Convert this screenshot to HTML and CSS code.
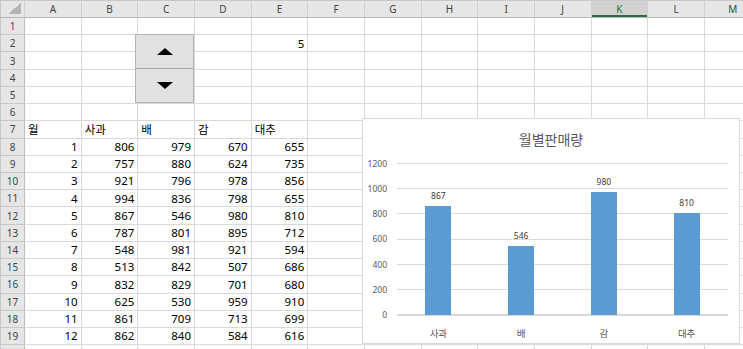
FILE: index.html
```html
<!DOCTYPE html>
<html lang="ko">
<head>
    <meta charset="UTF-8">
    <title>월별판매량</title>
    <link rel="stylesheet" href="styles.css">
</head>
<body>

    <table class="sheet">
        <colgroup><col class="head-col"><col span="13" class="cell-col"></colgroup>
        <tr class="col-head">
            <th class="corner"></th><th>A</th><th>B</th><th>C</th><th>D</th><th>E</th><th>F</th><th>G</th><th>H</th><th>I</th><th>J</th><th class="sel">K</th><th>L</th><th>M</th>
        </tr>
        <tr><th>1</th><td></td><td></td><td></td><td></td><td></td><td></td><td></td><td></td><td></td><td></td><td></td><td></td><td></td></tr>
        <tr><th>2</th><td></td><td></td><td></td><td></td><td>5</td><td></td><td></td><td></td><td></td><td></td><td></td><td></td><td></td></tr>
        <tr><th>3</th><td></td><td></td><td></td><td></td><td></td><td></td><td></td><td></td><td></td><td></td><td></td><td></td><td></td></tr>
        <tr><th>4</th><td></td><td></td><td></td><td></td><td></td><td></td><td></td><td></td><td></td><td></td><td></td><td></td><td></td></tr>
        <tr><th>5</th><td></td><td></td><td></td><td></td><td></td><td></td><td></td><td></td><td></td><td></td><td></td><td></td><td></td></tr>
        <tr><th>6</th><td></td><td></td><td></td><td></td><td></td><td></td><td></td><td></td><td></td><td></td><td></td><td></td><td></td></tr>
        <tr class="labels"><th>7</th><td>월</td><td>사과</td><td>배</td><td>감</td><td>대추</td><td></td><td></td><td></td><td></td><td></td><td></td><td></td><td></td></tr>
        <tr><th>8</th><td>1</td><td>806</td><td>979</td><td>670</td><td>655</td><td></td><td></td><td></td><td></td><td></td><td></td><td></td><td></td></tr>
        <tr><th>9</th><td>2</td><td>757</td><td>880</td><td>624</td><td>735</td><td></td><td></td><td></td><td></td><td></td><td></td><td></td><td></td></tr>
        <tr><th>10</th><td>3</td><td>921</td><td>796</td><td>978</td><td>856</td><td></td><td></td><td></td><td></td><td></td><td></td><td></td><td></td></tr>
        <tr><th>11</th><td>4</td><td>994</td><td>836</td><td>798</td><td>655</td><td></td><td></td><td></td><td></td><td></td><td></td><td></td><td></td></tr>
        <tr><th>12</th><td>5</td><td>867</td><td>546</td><td>980</td><td>810</td><td></td><td></td><td></td><td></td><td></td><td></td><td></td><td></td></tr>
        <tr><th>13</th><td>6</td><td>787</td><td>801</td><td>895</td><td>712</td><td></td><td></td><td></td><td></td><td></td><td></td><td></td><td></td></tr>
        <tr><th>14</th><td>7</td><td>548</td><td>981</td><td>921</td><td>594</td><td></td><td></td><td></td><td></td><td></td><td></td><td></td><td></td></tr>
        <tr><th>15</th><td>8</td><td>513</td><td>842</td><td>507</td><td>686</td><td></td><td></td><td></td><td></td><td></td><td></td><td></td><td></td></tr>
        <tr><th>16</th><td>9</td><td>832</td><td>829</td><td>701</td><td>680</td><td></td><td></td><td></td><td></td><td></td><td></td><td></td><td></td></tr>
        <tr><th>17</th><td>10</td><td>625</td><td>530</td><td>959</td><td>910</td><td></td><td></td><td></td><td></td><td></td><td></td><td></td><td></td></tr>
        <tr><th>18</th><td>11</td><td>861</td><td>709</td><td>713</td><td>699</td><td></td><td></td><td></td><td></td><td></td><td></td><td></td><td></td></tr>
        <tr><th>19</th><td>12</td><td>862</td><td>840</td><td>584</td><td>616</td><td></td><td></td><td></td><td></td><td></td><td></td><td></td><td></td></tr>
        <tr><th></th><td></td><td></td><td></td><td></td><td></td><td></td><td></td><td></td><td></td><td></td><td></td><td></td><td></td></tr>
    </table>

    <!-- spin button form control -->
    <div class="spinner">
        <button class="spin-btn"><span class="tri-up"></span></button>
        <button class="spin-btn"><span class="tri-down"></span></button>
    </div>

    <!-- chart object -->
    <div class="chart">
        <div class="chart-title">월별판매량</div>
        <div class="chart-body">
            <div class="axis-y">
                <span>1200</span><span>1000</span><span>800</span><span>600</span><span>400</span><span>200</span><span>0</span>
            </div>
            <div class="plot">
                <div class="slot"><span class="value">867</span><div class="bar" style="height: 109px;"></div></div>
                <div class="slot"><span class="value">546</span><div class="bar" style="height: 69px;"></div></div>
                <div class="slot"><span class="value">980</span><div class="bar" style="height: 123px;"></div></div>
                <div class="slot"><span class="value">810</span><div class="bar" style="height: 102px;"></div></div>
            </div>
        </div>
        <div class="axis-x">
            <span>사과</span><span>배</span><span>감</span><span>대추</span>
        </div>
    </div>

</body>
</html>
```

FILE: styles.css
```css
body {
    margin: 0; overflow: hidden;
    width: 743px; height: 349px; position: relative;
    background: #fff;
    font-family: 'Noto Sans', 'Noto Sans CJK KR', sans-serif;
}

/* Worksheet grid */
.sheet {
    border-collapse: collapse; table-layout: fixed;
    width: 761px; font-size: 11.5px; color: #000;
}
.head-col { width: 24px; }
.cell-col { width: 56.67px; }

.sheet tr { height: 17.23px; }
.sheet td {
    border: 1px solid #d9d9d9; padding: 0 3px;
    text-align: right; white-space: nowrap; overflow: hidden;
    line-height: 1; vertical-align: middle;
}
.sheet tr.labels td { text-align: left; }

.sheet th {
    background: #e6e6e6; color: #444; font-weight: normal;
    font-size: 10px; padding: 0; line-height: 1;
    border: 1px solid #c8c8c8; border-right-color: #bdbdbd;
}
.sheet tr.col-head { height: 17px; }
.col-head th { border-bottom-color: #b8b8b8; border-right-color: #d0d0d0; }
.col-head th.sel {
    background: #d2d2d2; color: #217346;
    box-shadow: inset 0 -2px 0 #217346;
}
.corner {
    background:
        linear-gradient(to top left, #b4b4b4 50%, transparent 50%) no-repeat right 3px bottom 3px / 13px 11px,
        #e6e6e6 !important;
}

/* Spin button */
.spinner {
    position: absolute; left: 135px; top: 34px;
    width: 59px; height: 69px; box-sizing: border-box;
    border: 1px solid #b2b2b2; background: #e1e1e1;
    display: flex; flex-direction: column;
}
.spin-btn {
    flex: 1; margin: 0; padding: 0;
    background: #e1e1e1; border: none;
    display: flex; justify-content: center; align-items: center;
}
.spin-btn + .spin-btn { border-top: 1px solid #a8a8a8; }
.tri-up {
    border-left: 8px solid transparent; border-right: 8px solid transparent;
    border-bottom: 7px solid #000;
}
.tri-down {
    border-left: 8px solid transparent; border-right: 8px solid transparent;
    border-top: 7px solid #000;
}

/* Chart */
.chart {
    position: absolute; left: 362px; top: 118px;
    width: 378px; height: 226px; box-sizing: border-box;
    border: 1px solid #d9d9d9; background: #fff;
    color: #595959;
}
.chart-title {
    padding-top: 11px; text-align: center;
    font-size: 14px; line-height: 20px;
}
.chart-body {
    display: flex; gap: 10px; margin-top: 14px;
}
.axis-y {
    width: 24px; height: 161px; margin-top: -5px;
    display: flex; flex-direction: column; justify-content: space-between;
    text-align: right; font-size: 8.5px; line-height: 10px;
}
.plot {
    width: 331px; height: 151px;
    border-top: 1px solid #d9d9d9; border-bottom: 1px solid #d9d9d9;
    margin-top: -1px;
    background: repeating-linear-gradient(to bottom, transparent 0 24.17px, #d9d9d9 24.17px 25.17px);
    display: flex;
}
.slot {
    flex: 1;
    display: flex; flex-direction: column; justify-content: flex-end; align-items: center;
}
.value { font-size: 8.5px; line-height: 10px; margin-bottom: 5px; color: #404040; }
.bar { width: 26px; background: #5b9bd5; }

.axis-x {
    display: flex; width: 331px; margin-left: 34px; margin-top: 8px;
    font-size: 9.5px; line-height: 12px;
}
.axis-x span { flex: 1; text-align: center; }
```
